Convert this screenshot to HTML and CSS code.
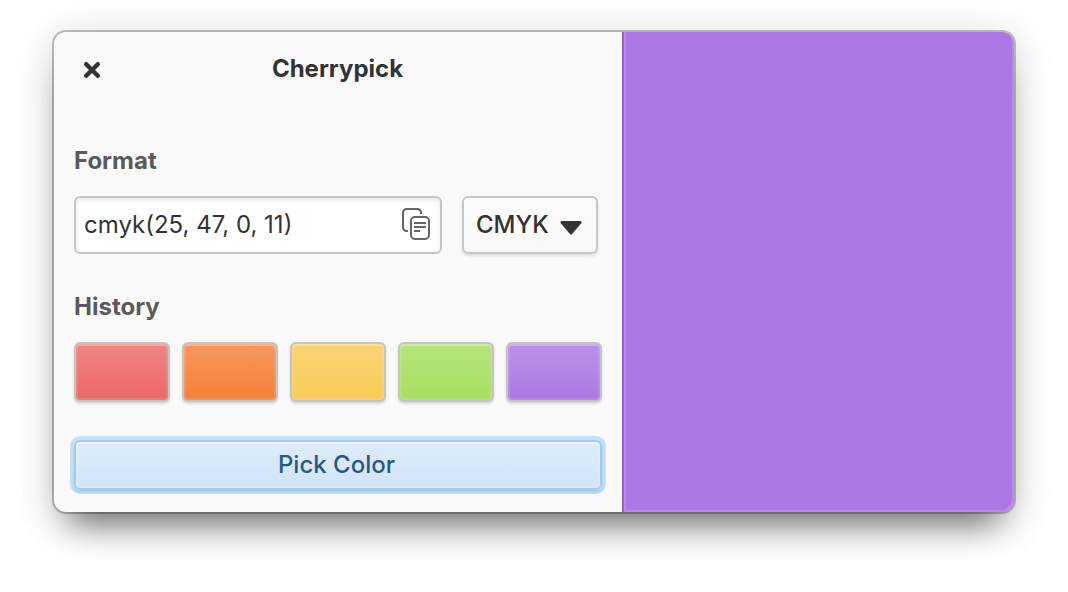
FILE: index.html
```html
<!DOCTYPE html>
<html lang="en">
<head>
<meta charset="utf-8">
<title>Cherrypick</title>
<link rel="stylesheet" href="styles.css">
</head>
<body>
<main class="window">
  <section class="panel">
    <header class="titlebar">
      <button class="close" aria-label="Close"><svg width="18" height="18" viewBox="0 0 18 18"><path d="M3.200 3.200 14.800 14.800M14.800 3.200 3.200 14.800"/></svg></button>
      <h1 class="title">Cherrypick</h1>
    </header>
    <h2 class="heading">Format</h2>
    <div class="format">
      <div class="entry">
        <span class="value">cmyk(25, 47, 0, 11)</span>
        <svg class="copy" width="28" height="32" viewBox="0 0 28 32"><path d="M6 23H5Q1 23 1 19V5Q1 1 5 1H15Q19 1 19 5V6"/><rect x="9" y="9" width="18" height="22" rx="4"/><path d="M12 15H24M12 19H24M12 23H18"/></svg>
      </div>
      <button class="select"><span>CMYK</span><svg width="22" height="14" viewBox="0 0 22 14"><path d="M1.500 0H20.500Q22 .5 21.500 2L12 13Q11 14 10 13L.5 2Q0 .5 1.500 0Z"/></svg></button>
    </div>
    <h2 class="heading">History</h2>
    <div class="history">
      <button class="swatch red" aria-label="Red"></button>
      <button class="swatch orange" aria-label="Orange"></button>
      <button class="swatch yellow" aria-label="Yellow"></button>
      <button class="swatch green" aria-label="Green"></button>
      <button class="swatch purple" aria-label="Purple"></button>
    </div>
    <button class="pick">Pick Color</button>
  </section>
  <section class="preview"></section>
</main>
</body>
</html>
```
FILE: styles.css
```css
* { box-sizing: border-box; }
body {
  margin: 0;
  height: 592px;
  padding: 32px 54px;
  overflow: hidden;
  background: #fff;
  color: #333;
  font: 24px/30px Inter, sans-serif;
}
button {
  margin: 0;
  padding: 0;
  border: 0;
  color: inherit;
  font: inherit;
}
svg { display: block; flex: none; }
.window {
  display: flex;
  width: 960px;
  height: 480px;
  border-radius: 12px;
  background: #fafafa;
  box-shadow:
    0 0 0 2px rgba(0, 0, 0, .24),
    0 28px 32px -16px rgba(0, 0, 0, .5),
    0 6px 40px rgba(0, 0, 0, .18);
}
.panel {
  width: 568px;
  padding: 0 20px;
}
.titlebar {
  display: grid;
  grid-template-columns: 36px 1fr 36px;
  align-items: center;
  height: 76px;
}
.close {
  display: grid;
  place-items: center;
  height: 36px;
  background: none;
}
.close svg {
  fill: none;
  stroke: #333;
  stroke-width: 4.400;
  stroke-linecap: round;
}
.title {
  margin: 0 1px 2px 0;
  font-size: 24px;
  font-weight: 700;
  text-align: center;
}
.heading {
  margin: 0;
  color: #5a5a5a;
  font-size: 24px;
  font-weight: 700;
}
.titlebar + .heading { margin-top: 38px; }
.format {
  display: flex;
  gap: 20px;
  margin: 20px 0 38px;
}
.entry, .select {
  display: flex;
  align-items: center;
  height: 58px;
  border: 2px solid #c6c6c6;
  border-radius: 6px;
}
.entry {
  justify-content: space-between;
  width: 368px;
  padding: 0 10px 0 8px;
  background: #fff;
  box-shadow: inset 0 2px 4px rgba(0, 0, 0, .1);
}
.copy {
  margin-bottom: 2px;
  fill: none;
  stroke: #666;
  stroke-width: 2;
}
.select {
  justify-content: space-between;
  width: 136px;
  padding: 0 14px 0 12px;
  background: linear-gradient(#fcfcfc, #f9f9f9);
  box-shadow: 0 2px 3px rgba(0, 0, 0, .12);
  font-weight: 500;
}
.select svg { margin-top: 5px; fill: #333; }
.history {
  display: flex;
  gap: 12px;
  margin: 20px 0 38px;
}
.swatch {
  width: 96px;
  height: 60px;
  border: 2px solid #c4c4c4;
  border-radius: 6px;
  background-image: linear-gradient(rgba(255, 255, 255, .2), rgba(255, 255, 255, 0));
  background-origin: border-box;
  box-shadow:
    inset 0 0 0 2px rgba(255, 255, 255, .12),
    inset 0 2px 0 rgba(255, 255, 255, .2),
    0 2px 3px rgba(0, 0, 0, .15);
}
.red { background-color: #ed6666; }
.orange { background-color: #f57f37; }
.yellow { background-color: #f9cb55; }
.green { background-color: #a5df5d; }
.purple { background-color: #ab77e4; }
.pick {
  display: block;
  width: 528px;
  height: 50px;
  border: 2px solid #a3caec;
  border-radius: 6px;
  background: linear-gradient(#dcecfc, #d1e5f8);
  box-shadow:
    inset 0 0 0 2px rgba(255, 255, 255, .2),
    inset 0 2px 0 rgba(255, 255, 255, .4),
    0 2px 3px rgba(90, 145, 205, .3),
    0 0 0 4px #c6e0f7;
  color: #2b5882;
  font-weight: 500;
  padding-right: 3px;
}
.preview {
  flex: 1;
  border-left: 2px solid #9366c4;
  border-radius: 0 12px 12px 0;
  background: #ab77e4;
  box-shadow: inset 2px 0 #bb88ee, inset -2px -2px #bb88ee;
}
```
